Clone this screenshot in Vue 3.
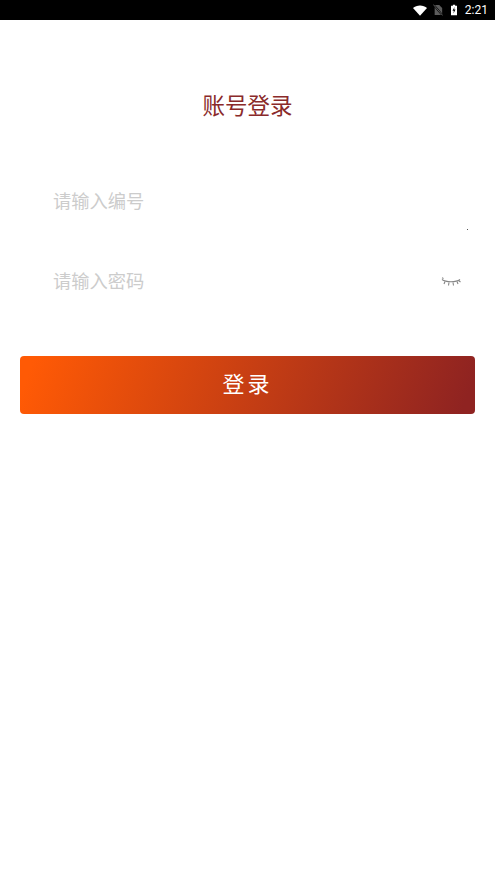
<script setup>
const fields = [
  { id: 'code', text: '请输入编号' },
  { id: 'pwd', text: '请输入密码', eye: true }
]
</script>

<template>
  <div class="page">
    <div class="status">
      <svg class="wifi" viewBox="0 0 16 12"><path d="M0 3.2C2 1.3 4.8 0.2 8 0.2s6 1.1 8 3L8 12z" fill="#fff"/></svg>
      <svg class="nosim" viewBox="0 0 12 14">
        <path d="M2 1h5.5L11 4.500V13H2z" fill="#5c5c5c"/>
        <path d="M0.500 0.500L11.500 13.500" stroke="#000" stroke-width="2.200"/>
        <path d="M0.500 0.500L11.500 13.500" stroke="#808080" stroke-width="0.900"/>
      </svg>
      <svg class="batt" viewBox="0 0 8 14">
        <path d="M2.500 0h3v1.200H8V14H0V1.200h2.500z" fill="#fff"/>
        <path d="M4.700 3L2 8h1.800l-.5 3.500L6 6.300H4.200z" fill="#000"/>
      </svg>
      <span class="time">2:21</span>
    </div>

    <h1 class="title">账号登录</h1>

    <div class="form">
      <div v-for="f in fields" :key="f.id" class="field">
        <span class="hint">{{ f.text }}</span>
        <svg v-if="f.eye" class="eye" viewBox="0 0 20 12" fill="none" stroke="#858585" stroke-width="1.100">
          <path d="M1 2.500C5 5.500 15 5.500 19 2.500" />
          <path d="M2.500 1.500L1 0.800M4 4.500L3 7M8 5.500L7.500 8.500M12 5.500L12.500 8.500M16 4.500L17 7M17.500 3.500L19.500 5" />
        </svg>
        <i v-else class="dot"></i>
      </div>
    </div>

    <button class="submit">登录</button>
  </div>
</template>

<style>
html, body { margin: 0; background: #fff; }
</style>

<style scoped>
.page {
  width: 495px;
  height: 880px;
  background: #fff;
  font-family: "Noto Sans CJK SC", "Noto Sans", sans-serif;
  overflow: hidden;
}
.status {
  height: 20px;
  background: #000;
  display: flex;
  align-items: center;
  justify-content: flex-end;
  padding-right: 7px;
  box-sizing: border-box;
}
.wifi { width: 14px; height: 11px; margin-right: 6px; }
.nosim { width: 10px; height: 12px; margin-right: 8px; }
.batt { width: 6px; height: 12px; margin-right: 8px; }
.time {
  color: #fff;
  font: 12px/20px Roboto, sans-serif;
}
.title {
  margin: 0;
  padding-top: 68px;
  text-align: center;
  font-size: 22.500px;
  font-weight: 400;
  line-height: 32px;
  color: #8a2a2a;
}
.form {
  margin-top: 65px;
  padding: 0 20px 0 53px;
  display: flex;
  flex-direction: column;
  gap: 50px;
}
.field {
  height: 30px;
  display: flex;
  align-items: center;
  justify-content: space-between;
  position: relative;
}
.hint {
  font-size: 18.300px;
  line-height: 30px;
  color: #cccccc;
}
.eye { width: 20px; height: 12px; margin: 6px 14px 0 0; }
.dot {
  position: absolute;
  right: 7px;
  top: 44px;
  width: 1px;
  height: 1px;
  background: #555;
}
.submit {
  display: block;
  width: 455px;
  height: 58px;
  margin: 61px 20px 0;
  border: 0;
  border-radius: 4px;
  background: linear-gradient(110deg, #ff5a05 3%, #8f2321 97%);
  color: #fff;
  font-family: inherit;
  font-size: 22px;
  line-height: 52px;
  letter-spacing: 3px;
  padding: 0 0 6px;
}
</style>
